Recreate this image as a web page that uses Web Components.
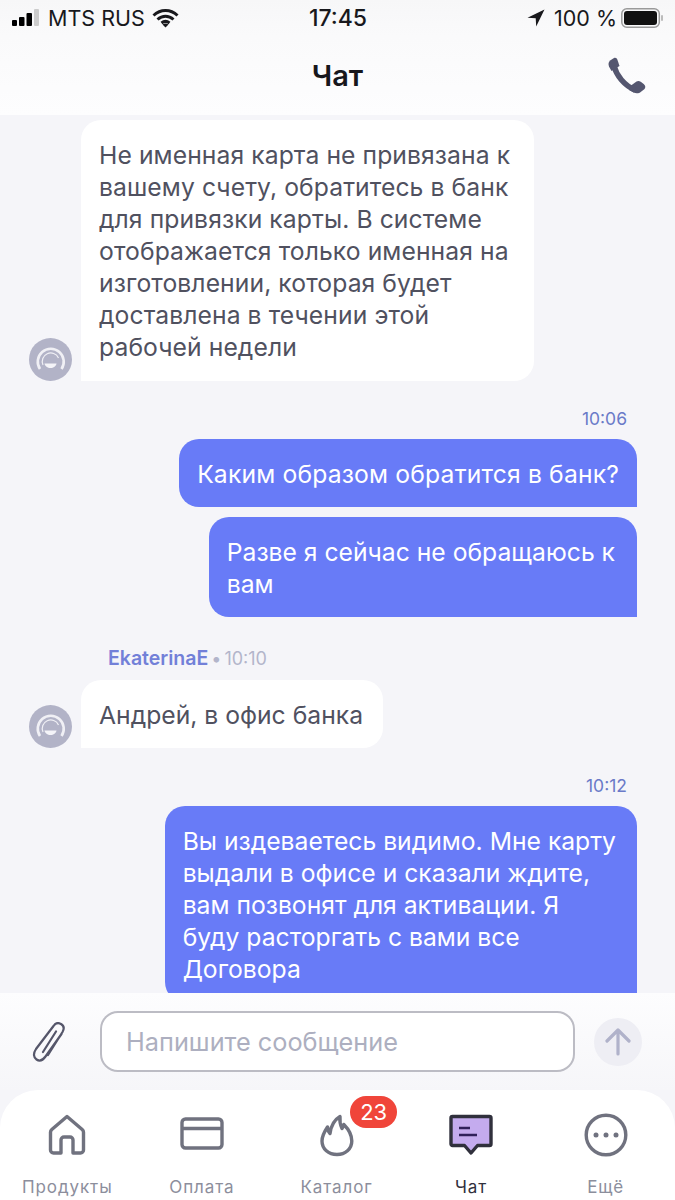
<!DOCTYPE html>
<html lang="ru">
<head>
<meta charset="utf-8">
<title>Чат</title>
<style>
    html, body {margin: 0; padding: 0; height: 100%;}
    body {font-family: Inter, "Noto Sans", sans-serif; background: #f5f5f9;}
    #app {display: flex; flex-direction: column; width: 675px; height: 1200px; overflow: hidden;}
</style>
</head>
<body>
<div id="app">
    <status-bar></status-bar>
    <chat-header></chat-header>
    <chat-feed>
        <chat-bubble from="them" avatar style="--top: 5px; --end: 24px; --bottom: 18px; --track: .08px">Не именная карта не привязана к<br>вашему счету, обратитесь в банк<br>для привязки карты. В системе<br>отображается только именная на<br>изготовлении, которая будет<br>доставлена в течении этой<br>рабочей недели</chat-bubble>
        <chat-time style="--top: 28px">10:06</chat-time>
        <chat-bubble from="me" style="--top: 10px; --track: .16px">Каким образом обратится в банк?</chat-bubble>
        <chat-bubble from="me" style="--top: 10px; --end: 22px">Разве я сейчас не обращаюсь к<br>вам</chat-bubble>
        <chat-sender name="EkaterinaE" time="10:10" style="--top: 30px"></chat-sender>
        <chat-bubble from="them" avatar style="--top: 10px; --end: 20px">Андрей, в офис банка</chat-bubble>
        <chat-time style="--top: 28px">10:12</chat-time>
        <chat-bubble from="me" style="--top: 10px; --end: 21px">Вы издеваетесь видимо. Мне карту<br>выдали в офисе и сказали ждите,<br>вам позвонят для активации. Я<br>буду расторгать с вами все<br>Договора</chat-bubble>
    </chat-feed>
    <message-box></message-box>
    <tab-bar>
        <tab-item label="Продукты"><svg viewBox="0 0 44 44" fill="none" stroke="#70727f" stroke-width="3.4" stroke-linejoin="round"><path d="M22 3.500 6.800 16.500c-.8.700-1.300 1.700-1.300 2.800V37c0 1.700 1.300 3 3 3h7.500V27c0-1.700 1.300-3 3-3h6c1.700 0 3 1.300 3 3v13h7.500c1.700 0 3-1.300 3-3V19.300c0-1.100-.5-2.100-1.300-2.800z"/></svg></tab-item>
        <tab-item label="Оплата"><svg viewBox="0 0 44 44" fill="none" stroke="#70727f" stroke-width="3.4"><rect x="2" y="6" width="40" height="29" rx="3.500"/><path d="M2 15.500h40"/></svg></tab-item>
        <tab-item label="Каталог" badge="23"><svg viewBox="0 0 44 44" fill="none" stroke="#70727f" stroke-width="3.4" stroke-linejoin="round" stroke-linecap="round"><path d="M23 41.500c-8.500 0-15-5.500-15-13.500 0-4 1.500-8 5.500-14 .3 3 1 5 2.500 6.500C17 13 20 7 26 3.500c-.5 5 .5 9 2 12 .8-1.200 1.500-2.500 1.800-4 5 5 8 10.500 8 16.500 0 8-6.500 13.500-14.800 13.500z"/></svg></tab-item>
        <tab-item label="Чат" active><svg viewBox="0 0 44 44" fill="none" stroke-linejoin="round"><path d="M3.500 3.500h37c.8 0 1.500.7 1.500 1.500v26c0 .8-.7 1.500-1.500 1.500H28.500L22 40l-6.500-7.500h-12c-.8 0-1.500-.7-1.500-1.500V5c0-.8.700-1.500 1.500-1.500z" fill="#c4abee" stroke="#30303c" stroke-width="3.400"/><path d="M10 15h11M10 22h18" stroke="#30205a" stroke-width="2.600"/></svg></tab-item>
        <tab-item label="Ещё"><svg viewBox="0 0 44 44" fill="none" stroke="#70727f" stroke-width="3.4"><circle cx="22" cy="22" r="19.800"/><g fill="#70727f" stroke="none"><circle cx="12" cy="22" r="2.500"/><circle cx="22" cy="22" r="2.500"/><circle cx="32" cy="22" r="2.500"/></g></svg></tab-item>
    </tab-bar>
</div>
<script>
class StatusBar extends HTMLElement {
    constructor() {
        super()
        this.attachShadow({mode: 'open'}).innerHTML = `
        <style>
            :host {display: grid; grid-template-columns: 1fr auto 1fr; align-items: center; height: 36px; padding: 0 11px 0 12px; color: #18181c; font-size: 21.500px; flex: none; background: linear-gradient(#f7f7f8, #fafafb);}
            div {display: flex; align-items: center;}
            .right {justify-content: flex-end; gap: 4px;}
            .right svg:first-child {margin-right: 5px;}
            .time {font-weight: 500; font-size: 23px;}
            .carrier {gap: 7px;}
            .right span {font-size: 21.500px;}
        </style>
        <div class="carrier">
            <svg width="29" height="18" viewBox="0 0 29 18"><rect y="11" width="5" height="6" rx="1"/><rect x="7" y="8" width="5.500" height="9" rx="1"/><rect x="14.500" y="4" width="5.500" height="13" rx="1"/><rect x="22" y="0" width="5" height="17" rx="1" fill="#ccc"/></svg>
            <span>MTS RUS</span>
            <svg width="27" height="20" viewBox="0 0 27 20" fill="none" stroke="#18181c" stroke-width="3"><path d="M1.500 7.500c7-6.600 17-6.600 24 0M5.500 11.500c4.800-4.300 11.200-4.300 16 0M9.500 15c2.500-2 5.500-2 8 0"/><path d="M10.500 16.500 13.500 19.500 16.500 16.500c-1.800-1.500-4.200-1.500-6 0z" fill="#18181c" stroke="none"/></svg>
        </div>
        <div class="time">17:45</div>
        <div class="right">
            <svg width="18" height="18" viewBox="0 0 18 18"><path d="M17.500.5.500 8.800l8.200.5.500 8.200z" fill="#18181c"/></svg>
            <span>100 %</span>
            <svg width="43" height="20" viewBox="0 0 43 20"><rect x=".8" y=".8" width="37.500" height="18.400" rx="5" fill="none" stroke="#9a9a9a" stroke-width="1.500"/><rect x="3" y="3" width="33" height="14" rx="3" fill="#111"/><rect x="40" y="7" width="2" height="6" rx="1" fill="#bbb"/></svg>
        </div>`
    }
}

class ChatHeader extends HTMLElement {
    constructor() {
        super()
        this.attachShadow({mode: 'open'}).innerHTML = `
        <style>
            :host {display: grid; grid-template-columns: 1fr auto 1fr; align-items: center; height: 79px; padding: 0 28px; flex: none; background: linear-gradient(#fafafb, #fdfdfe); color: #17171c;}
            h1 {grid-column: 2; margin: 0; font-size: 29px; font-weight: 600;}
            svg {justify-self: end; grid-column: 3;}
        </style>
        <h1>Чат</h1>
        <svg width="40" height="40" viewBox="0 0 40 40" fill="#54566f">
            <path d="M7 2 3.500 4.200C1.500 5.500 1 8 2 10.500l2.500 4.500 8-5-2-6C9.800 2 8.500 1.200 7 2z"/>
            <path d="M24 29.500l5.500-4c1.200-.8 2.800-.8 4.200.2l3 2.200c1.800 1.400 2.200 3.800.6 5.300L34 35.800c-2 1.700-4.800 2-7.500.7l-4.500-2.500z"/>
            <path d="M7 10c2.500 9.500 10 19 21 24" fill="none" stroke="#54566f" stroke-width="5.500"/>
        </svg>`
    }
}

class ChatFeed extends HTMLElement {
    constructor() {
        super()
        this.attachShadow({mode: 'open'}).innerHTML = `
        <style>
            :host {display: flex; flex-direction: column; flex: 1; min-height: 0; overflow: hidden; background: #f5f5f9;}
        </style>
        <slot></slot>`
    }
}

class ChatBubble extends HTMLElement {
    constructor() {
        super()
        this.attachShadow({mode: 'open'}).innerHTML = `
        <style>
            :host {display: flex; align-items: flex-end; flex: none; margin-top: var(--top, 0); font-size: 24.700px; line-height: 32px; letter-spacing: var(--track, 0); gap: 9px; padding: 0 38px 0 29px;}
            :host([from="me"]) {justify-content: flex-end;}
            .avatar {width: 43px; height: 43px; flex: none;}
            .text {padding: 19px var(--end, 18px) var(--bottom, 17px) 18px; border-radius: 20px; background: #fff; color: #50515f;}
            :host([from="them"]) .text {border-bottom-left-radius: 0;}
            :host([from="me"]) .text {background: #687bf7; color: #fff; border-bottom-right-radius: 0;}
        </style>
        ${this.hasAttribute('avatar') ? `<svg class="avatar" viewBox="0 0 43 43"><circle cx="21.500" cy="21.500" r="21.500" fill="#b2b3c7"/><path d="M11 31a13 13 0 1 1 21.500 0" fill="none" stroke="#f0f0f5" stroke-width="2.600"/><path d="M14 27a8.500 8.500 0 0 1 15.500-7" fill="none" stroke="#f0f0f5" stroke-width="1.200"/><path d="M15.500 25.500h12c-.3 2.500-3 4.500-6 4.500s-5.700-2-6-4.500z" fill="#f4f4f8"/></svg>` : ''}
        <div class="text"><slot></slot></div>`
    }
}

class ChatTime extends HTMLElement {
    constructor() {
        super()
        this.attachShadow({mode: 'open'}).innerHTML = `
        <style>
            :host {display: block; flex: none; margin-top: var(--top, 0); padding-right: 48px; text-align: right; font-size: 17.500px; line-height: 20px; color: #6a7ac8;}
        </style>
        <slot></slot>`
    }
}

class ChatSender extends HTMLElement {
    constructor() {
        super()
        this.attachShadow({mode: 'open'}).innerHTML = `
        <style>
            :host {display: flex; align-items: baseline; flex: none; margin-top: var(--top, 0); padding-left: 108px; font-size: 19.500px; line-height: 22px; gap: 3px;}
            b {font-weight: 600; color: #7280d8;}
            i {font-style: normal; color: #b3b5cb; font-size: 18px;}
        </style>
        <b>${this.getAttribute('name')}</b><i>•</i><i>${this.getAttribute('time')}</i>`
    }
}

class MessageBox extends HTMLElement {
    constructor() {
        super()
        this.attachShadow({mode: 'open'}).innerHTML = `
        <style>
            :host {display: flex; align-items: center; flex: none; height: 97px; box-sizing: border-box; padding: 0 33px 0 31px; background: linear-gradient(#fdfdfe, #f6f6f9); position: relative; z-index: 1;}
            svg.clip {flex: none; margin-right: 31px;}
            .field {flex: 1; height: 61px; box-sizing: border-box; border: 2px solid #bcbcc4; border-radius: 18px; background: #fff; display: flex; align-items: center; padding-left: 24px; font-size: 25.300px; color: #adafc0;}
            .send {flex: none; width: 48px; height: 48px; border-radius: 50%; background: #eeeef4; margin-left: 19px; display: flex; align-items: center; justify-content: center;}
        </style>
        <svg class="clip" width="38" height="40" viewBox="0 0 38 40" fill="none" stroke="#55566a" stroke-width="2.200" stroke-linecap="round"><path d="M17 33 31.500 10c2-3.500 1-6.500-1.500-8-2.500-1.500-5.500-1-7.500 2L5 27c-3 4.500-2.500 8.500.5 10.500 3 2 6.500.5 9-3L30.500 12M12 30 25 9.500"/></svg>
        <div class="field">Напишите сообщение</div>
        <div class="send"><svg width="28" height="28" viewBox="0 0 28 28" fill="none" stroke="#b0b2ca" stroke-width="3.200" stroke-linecap="round" stroke-linejoin="round"><path d="M14 26V3M3 13 14 2l11 11"/></svg></div>`
    }
}

class TabBar extends HTMLElement {
    constructor() {
        super()
        this.attachShadow({mode: 'open'}).innerHTML = `
        <style>
            :host {display: grid; grid-template-columns: repeat(5, 1fr); flex: none; height: 110px; box-sizing: border-box; padding-right: 2px; background: #fff; border-radius: 38px 38px 0 0;}
        </style>
        <slot></slot>`
    }
}

class TabItem extends HTMLElement {
    constructor() {
        super()
        let badge = this.getAttribute('badge')
        this.attachShadow({mode: 'open'}).innerHTML = `
        <style>
            :host {display: flex; flex-direction: column; align-items: center; position: relative; font-size: 17px; letter-spacing: .9px; color: #8c8e9c;}
            :host([active]) {color: #30303c;}
            ::slotted(svg) {width: 44px; height: 44px; display: block;}
            .icon {margin-top: 23px; height: 44px;}
            .label {margin-top: 20px; line-height: 20px;}
            .badge {position: absolute; top: 6px; left: 81px; min-width: 47px; height: 32px; box-sizing: border-box; border-radius: 16px; background: #f0453a; color: #fff; font-size: 22px; line-height: 32px; text-align: center; letter-spacing: 0;}
        </style>
        <div class="icon"><slot></slot></div>
        <div class="label">${this.getAttribute('label')}</div>
        ${badge ? `<div class="badge">${badge}</div>` : ''}`
    }
}

customElements.define('status-bar', StatusBar)
customElements.define('chat-header', ChatHeader)
customElements.define('chat-feed', ChatFeed)
customElements.define('chat-bubble', ChatBubble)
customElements.define('chat-time', ChatTime)
customElements.define('chat-sender', ChatSender)
customElements.define('message-box', MessageBox)
customElements.define('tab-bar', TabBar)
customElements.define('tab-item', TabItem)
</script>
</body>
</html>
